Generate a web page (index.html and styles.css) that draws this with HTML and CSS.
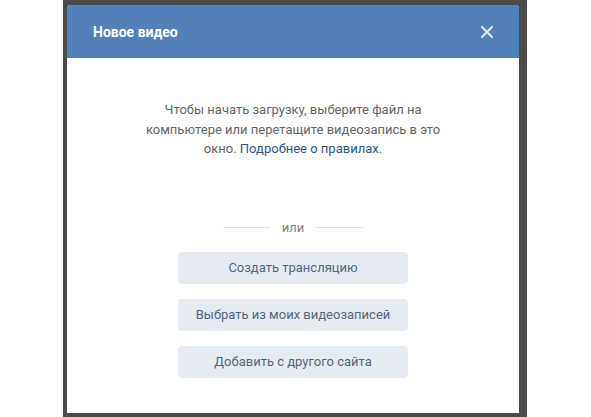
FILE: index.html
```html
<!DOCTYPE html>
<html lang="ru">
<head>
    <meta charset="UTF-8">
    <meta name="viewport" content="width=device-width, initial-scale=1.0">
    <title>Новое видео</title>
    <link rel="stylesheet" href="styles.css">
</head>
<body>
    <div class="overlay">
        <div class="box">
            <div class="box-head">
                <div class="box-title">Новое видео</div>
                <button class="box-close" aria-label="Закрыть">
                    <svg width="12" height="12" viewBox="0 0 12 12">
                        <path d="M1 1 L11 11 M11 1 L1 11" stroke="#e4ecf5" stroke-width="2" stroke-linecap="round"/>
                    </svg>
                </button>
            </div>
            <div class="box-body">
                <p class="upload-info">
                    Чтобы начать загрузку, выберите файл на компьютере или перетащите видеозапись в это окно. <a href="#">Подробнее о правилах</a>.
                </p>
                <div class="divider"><span>или</span></div>
                <div class="actions">
                    <button class="btn">Создать трансляцию</button>
                    <button class="btn">Выбрать из моих видеозаписей</button>
                    <button class="btn">Добавить с другого сайта</button>
                </div>
            </div>
        </div>
    </div>
</body>
</html>
```

FILE: styles.css
```css
* {
    margin: 0;
    padding: 0;
    box-sizing: border-box;
}

body {
    background: #fff;
    font-family: Roboto, "Open Sans", Arial, sans-serif;
    font-size: 13px;
}

.overlay {
    width: 464px;
    height: 417px;
    margin-left: 63px;
    padding: 5px 8px 4px 4px;
    background-color: #4b4b4b;
}

.box {
    height: 100%;
    background: #fff;
    border-radius: 4px 4px 0 0;
    overflow: hidden;
}

.box-head {
    height: 53px;
    background-color: #5181b8;
    display: flex;
    align-items: center;
    justify-content: space-between;
    padding: 0 25px 0 26px;
}

.box-title {
    color: #fff;
    font-size: 14px;
    font-weight: 700;
}

.box-close {
    border: 0;
    background: none;
    width: 14px;
    height: 14px;
    display: flex;
    align-items: center;
    justify-content: center;
    cursor: pointer;
}

.box-body {
    display: flex;
    flex-direction: column;
    align-items: center;
    padding-top: 42px;
}

.upload-info {
    width: 300px;
    text-align: center;
    color: #656565;
    line-height: 19.5px;
}

.upload-info a {
    color: #2a5885;
    text-decoration: none;
}

.divider {
    margin-top: 61px;
    display: flex;
    align-items: center;
    gap: 12px;
    color: #828282;
    line-height: 16px;
}

.divider::before,
.divider::after {
    content: "";
    width: 47px;
    height: 1px;
    background: #e1e5eb;
}

.actions {
    margin-top: 16px;
    display: flex;
    flex-direction: column;
    gap: 15px;
}

.btn {
    width: 230px;
    height: 32px;
    border: 0;
    border-radius: 4px;
    background-color: #e5ebf1;
    color: #55677d;
    font-family: inherit;
    font-size: 13px;
    cursor: pointer;
}
```
